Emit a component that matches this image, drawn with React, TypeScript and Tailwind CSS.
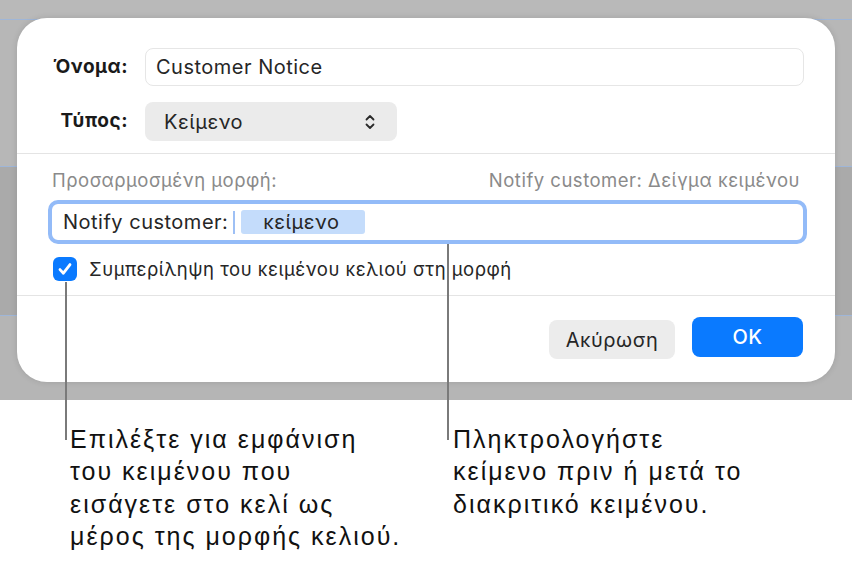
import React from 'react'

function Chevrons() {
  return (
    <svg width="10" height="16" viewBox="0 0 10 16" fill="none" stroke="#2a2a2a" strokeWidth="1.8" strokeLinecap="round" strokeLinejoin="round">
      <path d="M1.5 5.5 5 2l3.5 3.5" />
      <path d="M1.5 10.5 5 14l3.5-3.5" />
    </svg>
  )
}

function Backdrop() {
  // the spreadsheet behind the sheet, greyed out
  return (
    <div className="flex h-[400px] w-[852px] flex-col bg-[#b9b9b9]">
      <div className="h-[20px] border-b border-[#9fb6d8]" />
      <div className="h-[146px] bg-[#b7b7b7]" />
      <div className="h-[150px] border-y border-[#9fb6d8] bg-[#aaaaaa]" />
      <div className="flex-1 bg-[#b5b5b5]" />
    </div>
  )
}

function Dialog() {
  return (
    <div className="absolute left-[17px] top-[18px] flex h-[364px] w-[818px] flex-col rounded-[30px] bg-white font-['Inter','Noto_Sans',sans-serif] tracking-[0.5px] shadow-[0_0_6px_rgba(0,0,0,0.12)]">
      {/* name + type */}
      <div className="flex flex-col gap-[16px] pl-[34px] pr-[31px] pt-[30px]">
        <div className="flex items-center">
          <span className="w-[94px] pr-[17px] text-right text-[19px] font-bold text-[#1a1a1a]">Όνομα:</span>
          <div className="flex h-[38px] flex-1 items-center rounded-[8px] border border-[#e6e6e6] px-[10px] text-[20px] text-[#262626]">
            Customer Notice
          </div>
        </div>
        <div className="flex items-center">
          <span className="w-[94px] pr-[17px] text-right text-[19px] font-bold text-[#1a1a1a]">Τύπος:</span>
          <div className="flex h-[39px] w-[252px] items-center justify-between rounded-[8px] bg-[#ebebeb] pl-[19px] pr-[22px] text-[20px] text-[#262626]">
            <span>Κείμενο</span>
            <Chevrons />
          </div>
        </div>
      </div>

      <div className="mt-[12px] h-px bg-[#e4e4e4]" />

      {/* custom format */}
      <div className="flex flex-col pl-[31px] pr-[28px]">
        <div className="mt-[15px] flex h-[22px] items-center justify-between pl-[4px] pr-[7px] text-[18.5px] leading-[22px] text-[#8a8a8a]">
          <span>Προσαρμοσμένη μορφή:</span>
          <span>Notify customer: Δείγμα κειμένου</span>
        </div>
        <div className="mt-[9px] flex h-[44px] items-center rounded-[10px] border-[4px] border-[#93bbf8] bg-white pl-[11px] text-[20px] leading-none text-[#262626]">
          <span>Notify customer:</span>
          <span className="ml-[5px] h-[23px] w-[2px] bg-[#9ec0f5]" />
          <span className="ml-[6px] flex h-[24px] w-[124px] items-center rounded-[3px] bg-[#c4dcfb] pl-[22px]">κείμενο</span>
        </div>
        <div className="mt-[13px] flex h-[24px] items-center gap-[12px] pl-[5px]">
          <span className="flex h-[24px] w-[24px] items-center justify-center rounded-[6px] bg-[#0a7aff]">
            <svg width="18" height="18" viewBox="0 0 18 18" fill="none" stroke="white" strokeWidth="2.8" strokeLinecap="round" strokeLinejoin="round">
              <path d="M4 9.6 7.4 13.2 14 4.6" />
            </svg>
          </span>
          <span className="text-[18.5px] leading-[24px] text-[#262626]">Συμπερίληψη του κειμένου κελιού στη μορφή</span>
        </div>
      </div>

      <div className="mt-[14px] h-px bg-[#e4e4e4]" />

      {/* buttons */}
      <div className="flex items-start justify-end gap-[17px] pr-[32px] pt-[21px]">
        <button className="mt-[3px] h-[39px] w-[126px] rounded-[8px] bg-[#ececec] text-[20px] leading-none text-[#262626]">Ακύρωση</button>
        <button className="h-[40px] w-[111px] rounded-[8px] bg-[#0a7aff] text-[20px] font-medium leading-none text-white">OK</button>
      </div>
    </div>
  )
}

export default function App() {
  return (
    <div className="relative h-[564px] w-[854px] overflow-hidden bg-white">
      <Backdrop />
      <Dialog />

      {/* callout leader lines */}
      <div className="absolute left-[65px] top-[282px] h-[158px] w-[2px] bg-[#7a7a7a]" />
      <div className="absolute left-[447px] top-[244px] h-[196px] w-[2px] bg-[#7a7a7a]" />

      <div className="flex pt-[23px] font-['Liberation_Sans',Arial,sans-serif] text-[25px] leading-[32.3px] tracking-[2px] text-[#111]">
        <p className="ml-[70px] w-[370px]">
          Επιλέξτε για εμφάνιση
          <br />
          του κειμένου που
          <br />
          εισάγετε στο κελί ως
          <br />
          μέρος της μορφής κελιού.
        </p>
        <p className="ml-[13px] w-[360px]">
          Πληκτρολογήστε
          <br />
          κείμενο πριν ή μετά το
          <br />
          διακριτικό κειμένου.
        </p>
      </div>
    </div>
  )
}
